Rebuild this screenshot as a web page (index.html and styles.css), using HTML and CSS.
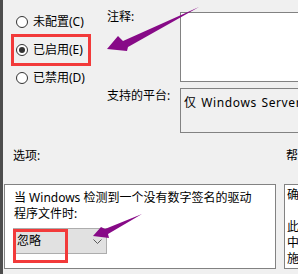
FILE: index.html
```html
<!DOCTYPE html>
<html lang="zh-CN">
<head>
<meta charset="utf-8">
<title>驱动程序代码签名</title>
<link rel="stylesheet" href="styles.css">
</head>
<body>
<div class="page">
  <div class="strip"></div>
  <div class="main">
    <div class="top">
      <div class="radios">
        <div class="radio"><span class="dot"></span><span>未配置(C)</span></div>
        <div class="radio"><span class="dot checked"></span><span>已启用(E)</span></div>
        <div class="radio"><span class="dot"></span><span>已禁用(D)</span></div>
      </div>
      <div class="fields">
        <div class="label label-first">注释:</div>
        <div class="box box-white"></div>
        <div class="label">支持的平台:</div>
        <div class="box box-gray">仅 Windows Server 2003 操作系统</div>
      </div>
    </div>
    <div class="heads">
      <div class="head-left">选项:</div>
      <div class="head-right">帮助:</div>
    </div>
    <div class="panes">
      <div class="pane options">
        <p class="opt-text">当 Windows 检测到一个没有数字签名的驱动<br>程序文件时:</p>
        <div class="combo">
          <span>忽略</span>
          <svg class="chev" width="9" height="5" viewBox="0 0 9 5"><polyline points="0.5,0.5 4.5,4.5 8.5,0.5" fill="none" stroke="#5a5a5a" stroke-width="1"/></svg>
        </div>
      </div>
      <div class="pane help">
        <div class="help-line">确定当用户试图安装未经数字签名的设备驱动程序时系统的响应。</div>
        <div class="help-line">&nbsp;</div>
        <div class="help-line">此设置为计算机上的用户建立最严格的响应方式。</div>
        <div class="help-line">中心设置可以强制使用最低级别的保护。</div>
        <div class="help-line">施加此设置后，用户无法选择较宽松的选项。</div>
      </div>
    </div>
  </div>
  <div class="mark mark-one"></div>
  <div class="mark mark-two"></div>
  <svg class="arrows" width="298" height="274" viewBox="0 0 298 274">
    <polygon points="107,49 118,36 123,41 199,7 128,47 127,51" fill="#870a87"/>
    <polygon points="93,236 101,227 105,229 142,214 108,234 109,238" fill="#870a87"/>
  </svg>
</div>
</body>
</html>
```
FILE: styles.css
```css
html, body {
  margin: 0;
  padding: 0;
  width: 298px;
  height: 274px;
  overflow: hidden;
  background: #f0f0f0;
}

body {
  font-family: "Noto Sans", "Noto Sans CJK SC", sans-serif;
  font-size: 12px;
  color: #000;
}

.page {
  position: relative;
  display: flex;
  width: 340px;
  height: 274px;
}

.strip {
  width: 3px;
  flex: none;
  background: #4d4d4d;
}

.main {
  flex: 1;
  padding-left: 1px;
  display: flex;
  flex-direction: column;
}

.top {
  display: flex;
  padding-top: 8px;
}

.radios {
  width: 103px;
  flex: none;
  box-sizing: border-box;
  padding-left: 12px;
  display: flex;
  flex-direction: column;
}

.radio {
  height: 28px;
  display: flex;
  align-items: center;
  gap: 5px;
  line-height: 16px;
}

.dot {
  width: 12px;
  height: 12px;
  box-sizing: border-box;
  border: 1px solid #333;
  border-radius: 50%;
  background: #fff;
  display: flex;
  align-items: center;
  justify-content: center;
}

.dot.checked::after {
  content: "";
  width: 6px;
  height: 6px;
  border-radius: 50%;
  background: #333;
}

.fields {
  flex: 1;
  margin-top: 4px;
  display: grid;
  grid-template-columns: 73px 1fr;
  grid-template-rows: 70px 45px;
  row-gap: 6px;
}

.label {
  line-height: 16px;
  white-space: nowrap;
}

.label-first {
  line-height: 12px;
  margin-top: -1px;
}

.box {
  box-sizing: border-box;
  border: 1px solid #828282;
}

.box-white {
  background: #fff;
}

.box-gray {
  background: #f0f0f0;
  padding: 7px 0 0 3px;
  line-height: 14px;
  letter-spacing: 0.6px;
  word-spacing: 1px;
  white-space: nowrap;
  overflow: hidden;
}

.heads {
  margin-top: 15px;
  display: grid;
  grid-template-columns: 280px 1fr;
  line-height: 16px;
}

.head-left {
  padding-left: 9px;
}

.head-right {
  padding-left: 2px;
  white-space: nowrap;
}

.panes {
  margin-top: 20px;
  height: 85px;
  display: grid;
  grid-template-columns: 272px 1fr;
  column-gap: 8px;
}

.pane {
  box-sizing: border-box;
  border: 1px solid #828282;
  background: #fff;
  overflow: hidden;
}

.options {
  padding: 5px 0 0 8px;
}

.opt-text {
  margin: 0;
  padding-left: 1px;
  line-height: 16px;
  white-space: nowrap;
}

.combo {
  margin-top: 6px;
  width: 94px;
  height: 26px;
  box-sizing: border-box;
  border: 1px solid #adadad;
  background: #e1e1e1;
  display: flex;
  align-items: center;
  justify-content: space-between;
  padding: 0 4px 0 3px;
  line-height: 16px;
}

.chev {
  display: block;
}

.help {
  padding: 2px 0 0 2px;
}

.help-line {
  line-height: 16px;
  white-space: nowrap;
}

.mark {
  position: absolute;
  box-sizing: border-box;
  border: 3px solid #f23a3a;
}

.mark-one {
  left: 11px;
  top: 34px;
  width: 80px;
  height: 32px;
}

.mark-two {
  left: 13px;
  top: 229px;
  width: 55px;
  height: 34px;
}

.arrows {
  position: absolute;
  left: 0;
  top: 0;
  pointer-events: none;
}
```
